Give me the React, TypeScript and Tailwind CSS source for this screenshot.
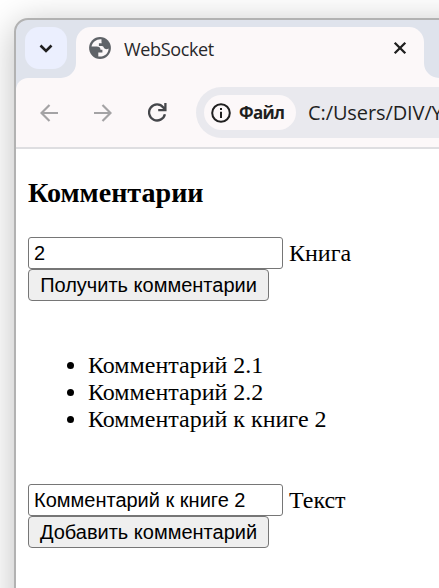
import React from "react";

function Globe() {
  return (
    <svg className="h-[22px] w-[22px]" viewBox="0 0 22 22">
      <circle cx="11" cy="11" r="10.9" fill="#5f6368" />
      <path
        d="M12.600 2.400C8 1.800 3.500 4.800 2.500 9.600h5.300c2.300 0 3.700 1.100 3.700 3.100h1.900v2.900H9.300v3.800c5.200 1 10.200-2.600 10.300-8-1.300 1-3.600 1.100-4.500-.3-.8-1.300-.6-2.100-2.300-2.100H9.900V6.300h2.900c-.4-1.500-.4-2.300-.2-3.900z"
        fill="#fcf8f9"
      />
    </svg>
  );
}

function Tab() {
  return (
    <div className="relative mt-[7px] ml-[9px] flex h-[51px] w-[348px] shrink-0 items-start rounded-t-[15px] bg-[#fcf8f9] pt-[10px] pl-[13px]">
      <svg className="absolute bottom-0 -left-[15px] h-[15px] w-[15px]" viewBox="0 0 15 15">
        <path d="M15 0v15H0A15 15 0 0 0 15 0z" fill="#fcf8f9" />
      </svg>
      <svg className="absolute -right-[15px] bottom-0 h-[15px] w-[15px]" viewBox="0 0 15 15">
        <path d="M0 0v15h15A15 15 0 0 1 0 0z" fill="#fcf8f9" />
      </svg>
      <Globe />
      <span className="ml-[13px] w-[90px] font-['Open_Sans',sans-serif] text-[18px] leading-[25px] tracking-[-0.35px] whitespace-nowrap text-[#28282b]">
        WebSocket
      </span>
      <svg className="mt-[4px] ml-[179px] h-3.5 w-3.5" viewBox="0 0 14 14" stroke="#1f1f1f" strokeWidth="2.300" fill="none">
        <path d="M1.700 1.700l10.600 10.600M12.300 1.700L1.700 12.300" />
      </svg>
    </div>
  );
}

function Toolbar() {
  return (
    <div className="flex h-[71px] items-center rounded-tl-[12px] border-b-2 border-[#dedee1] bg-[#fcf8f9]">
      <svg className="ml-[24px] h-[18px] w-[18px] shrink-0" viewBox="0 0 18 18" stroke="#a4a3a5" strokeWidth="2.200" fill="none">
        <path d="M18 9H1.500M9.500 1L1.500 9l8 8" />
      </svg>
      <svg className="ml-[36px] h-[18px] w-[18px] shrink-0" viewBox="0 0 18 18" stroke="#a4a3a5" strokeWidth="2.200" fill="none">
        <path d="M0 9h16.500M8.500 1l8 8-8 8" />
      </svg>
      <svg className="ml-[36px] h-[19px] w-[19px] shrink-0" viewBox="0 0 19 19" stroke="#45474b" strokeWidth="2.300" fill="none">
        <path d="M16.900 11.200A8 8 0 1 1 15.300 4.400L17 6.500M17.400 0v7.200h-7.200" />
      </svg>
      <div className="ml-[29px] flex h-[51px] w-[300px] shrink-0 items-center rounded-l-full bg-[#e9e9ee] pl-2">
        <div className="flex h-[35px] w-[92px] shrink-0 items-center rounded-full bg-[#fcf8f9] pl-[7px]">
          <svg className="h-5 w-5 shrink-0" viewBox="0 0 20 20">
            <circle cx="10" cy="10" r="8.800" fill="none" stroke="#1f1f1f" strokeWidth="2" />
            <path d="M9 8.800h2V15H9zM9 5h2v2H9z" fill="#1f1f1f" />
          </svg>
          <span className="ml-[8px] font-['Open_Sans',sans-serif] text-[17px] font-bold tracking-[-0.7px] text-[#1f1f1f]">
            Файл
          </span>
        </div>
        <span className="ml-[12px] font-['Open_Sans',sans-serif] text-[20px] tracking-[-0.1px] whitespace-nowrap text-[#1f1f1f]">
          C:/Users/DIV/Y
        </span>
      </div>
    </div>
  );
}

function Field({ value, label, action }: { value: string; label: string; action: string }) {
  return (
    <div>
      <div className="flex h-8 items-center">
        <input
          className="h-8 w-[255px] rounded-[3px] border border-[#767676] bg-white px-[5px] font-['Liberation_Sans',sans-serif] text-[20px] text-black"
          defaultValue={value}
        />
        <span className="ml-[6px] leading-[27px]">{label}</span>
      </div>
      <button className="block h-8 w-[241px] rounded-[4px] border border-[#767676] bg-[#efefef] text-center font-['Liberation_Sans',sans-serif] text-[20px] leading-[30px] whitespace-nowrap">
        {action}
      </button>
    </div>
  );
}

export default function App() {
  return (
    <div className="h-[588px] w-[439px] overflow-hidden bg-white pt-[18px] pl-[14px]">
      <div className="h-[700px] w-[600px] rounded-tl-[14px] border-2 border-[#b2b2b2] bg-[#dfe3ec] shadow-[0_6px_36px_rgba(0,0,0,0.26)]">
        <div className="flex h-[58px] w-[423px]">
          <div className="mt-[7px] ml-[9px] flex h-[42px] w-[42px] shrink-0 items-center justify-center rounded-[14px] bg-[#ebeffe]">
            <svg className="h-[9px] w-3.5" viewBox="0 0 14 9" fill="none" stroke="#1f1f1f" strokeWidth="2.600">
              <path d="M1.500 1.500L7 7l5.500-5.500" />
            </svg>
          </div>
          <Tab />
        </div>
        <Toolbar />
        <main className="h-[551px] bg-white pt-[28px] pl-3 font-['Liberation_Serif',serif] text-[24px] text-black">
          <h3 className="mb-[28px] text-[28.080px] leading-8 font-bold">Комментарии</h3>
          <Field value="2" label="Книга" action="Получить комментарии" />
          <ul className="mt-[51px] mb-[51px] list-disc pl-[60px] leading-[27px]">
            <li>Комментарий 2.1</li>
            <li>Комментарий 2.2</li>
            <li>Комментарий к книге 2</li>
          </ul>
          <Field value="Комментарий к книге 2" label="Текст" action="Добавить комментарий" />
        </main>
      </div>
    </div>
  );
}
